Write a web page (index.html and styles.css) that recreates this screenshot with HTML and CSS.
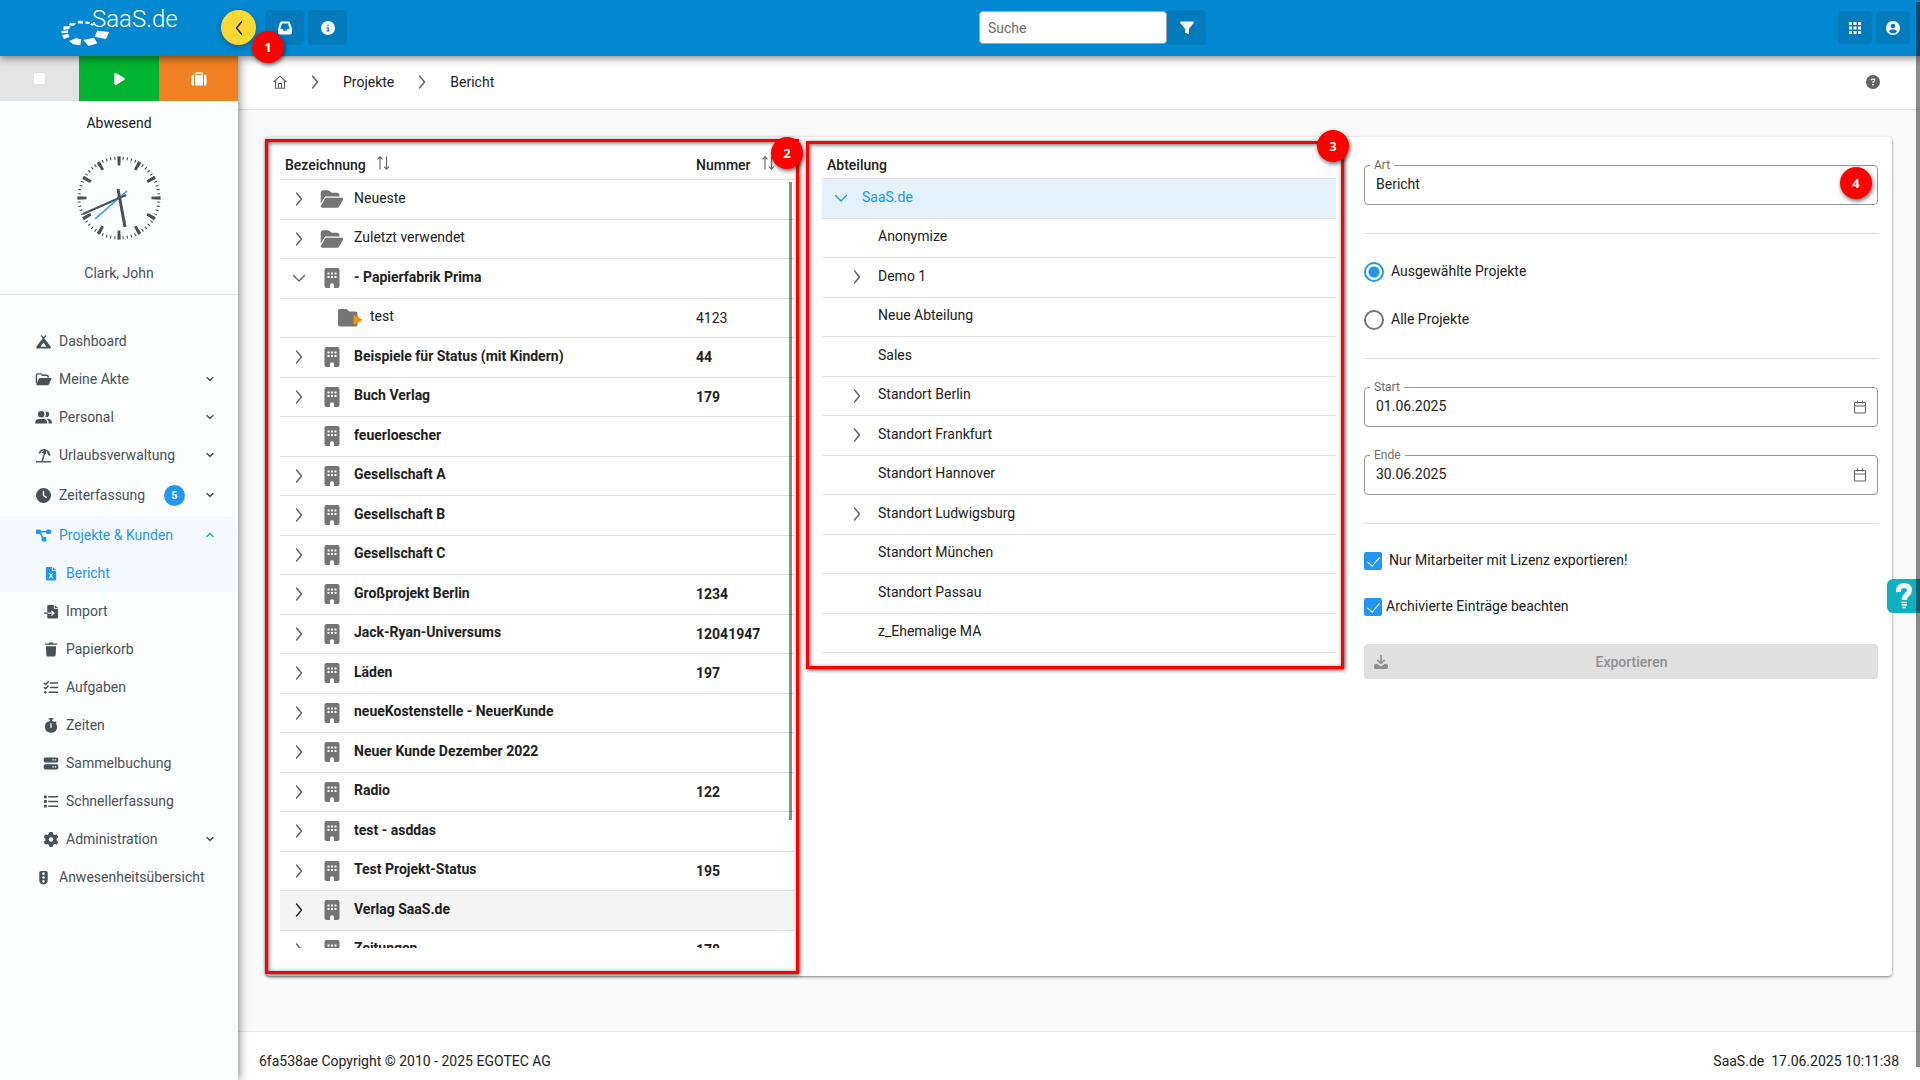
FILE: index.html
```html
<!DOCTYPE html>
<html lang="de">
<head>
    <meta charset="UTF-8">
    <meta name="viewport" content="width=device-width, initial-scale=1.0">
    <title>SaaS.de - Projekte Bericht</title>
    <link rel="stylesheet" href="styles.css">
</head>
<body>
    <!-- Icon sprite -->
    <svg class="sprite" aria-hidden="true">
        <symbol id="i-right" viewBox="0 0 14 14"><path d="M4.5 1l5 6-5 6" fill="none" stroke="currentColor" stroke-width="1.4" stroke-linecap="round" stroke-linejoin="round"/></symbol>
        <symbol id="i-down" viewBox="0 0 14 14"><path d="M1.5 4.5l5.500 5.500 5.500-5.500" fill="none" stroke="currentColor" stroke-width="1.4" stroke-linecap="round" stroke-linejoin="round"/></symbol>
        <symbol id="i-small-down" viewBox="0 0 8 8"><path d="M1 2.500l3 3 3-3" fill="none" stroke="currentColor" stroke-width="1.4" stroke-linecap="round"/></symbol>
        <symbol id="i-small-up" viewBox="0 0 8 8"><path d="M1 5.500l3-3 3 3" fill="none" stroke="currentColor" stroke-width="1.4" stroke-linecap="round"/></symbol>
        <symbol id="i-sort" viewBox="0 0 14 14"><path d="M4 13.500V.8M1.500 3.300L4 .8l2.500 2.500M10.500.5v12.700M8 10.700l2.500 2.500 2.500-2.500" fill="none" stroke="currentColor" stroke-width="1.100"/></symbol>
        <symbol id="i-folder-open" viewBox="0 0 576 512"><path d="M88.7 223.8L0 375.8V96C0 60.7 28.7 32 64 32H181.5c17 0 33.300 6.700 45.300 18.700l26.500 26.500c12 12 28.300 18.700 45.300 18.700H416c35.300 0 64 28.700 64 64v32H144c-22.800 0-43.800 12.100-55.300 31.800zm27.600 16.100C122.100 230 132.600 224 144 224H544c11.500 0 22 6.100 27.700 16.100s5.700 22.200-.1 32.100l-112 192C453.900 474 443.400 480 432 480H32c-11.500 0-22-6.100-27.700-16.100s-5.700-22.200 .1-32.100l112-192z"/></symbol>
        <symbol id="i-folder-line" viewBox="0 0 17 16"><path d="M1 12V3.500Q1 2 2.500 2H6l1.500 1.500H12Q13.500 3.500 13.500 5v1" fill="none" stroke="currentColor" stroke-width="1.500"/><path d="M4.500 6.500h12q.7.200.4.900l-2.700 5.800q-.4.800-1.200.8H1.300q-.8-.1-.4-.9l2.600-5.900q.3-.7 1-.7z"/></symbol>
        <symbol id="i-folder-run" viewBox="0 0 25 20"><path d="M2 1h6q1 0 1.600.8L11 3.500h6.500q2 0 2 2v11q0 2-2 2H2q-2 0-2-2V3q0-2 2-2z"/><path d="M16 7.500l8 4.300-8 4.400z" fill="#ff8f00" stroke="#ff8f00" stroke-linejoin="round"/></symbol>
        <symbol id="i-building" viewBox="0 0 15 20"><path fill-rule="evenodd" d="M2 0h11q2 0 2 2v16q0 2-2 2H9.500v-3q0-1.800-2-1.800t-2 1.800v3H2q-2 0-2-2V2Q0 0 2 0zM3 4.500v2h2v-2zM6.500 4.500v2h2v-2zM10 4.500v2h2v-2zM3 8v2h2V8zM6.500 8v2h2V8zM10 8v2h2V8z"/></symbol>
        <symbol id="i-tent" viewBox="0 0 16 16"><path fill-rule="evenodd" d="M6 1l2 2.500L10 1l1 .8-2 2.900 6.600 8.500q.8 2-1 2.300H1.400q-1.800-.3-1-2.300L7 4.700 5 1.800zM8 9l-3.200 4.500h6.400z"/></symbol>
        <symbol id="i-users" viewBox="0 0 18 16"><circle cx="6.500" cy="4.500" r="3.500"/><path d="M0 14.500q0-5 4-5h5q4 0 4 5z"/><path d="M11 1.600q4-.6 4 2.900t-4 2.900q1.600-3 0-5.800zM12.500 9.300q5.500-.5 5.500 5.200h-3.500q.2-3.500-2-5.200z"/></symbol>
        <symbol id="i-beach" viewBox="0 0 17 16"><path d="M.5 14h16v1.500H.5z"/><path d="M9.300 4.500l1.400.5-3 9.500-1.500-.5z"/><path d="M3 5.500Q5 .8 10 1q5.500 1.300 6 7.500l-2.800-1Q13 3.800 10.500 2.300q1 2 .8 4.500L6.500 5Q7.800 3 9.300 2 6.500 2.300 5 5.800L3 5.500z"/></symbol>
        <symbol id="i-clock" viewBox="0 0 512 512"><path fill-rule="evenodd" d="M256 0a256 256 0 1 1 0 512A256 256 0 1 1 256 0zM232 120V256c0 8 4 15.500 10.700 20l96 64c11 7.400 25.900 4.400 33.300-6.700s4.400-25.900-6.700-33.300L280 243.200V120c0-13.300-10.700-24-24-24s-24 10.700-24 24z"/></symbol>
        <symbol id="i-diagram" viewBox="0 0 17 16"><rect x=".5" y="1.500" width="5" height="5" rx="1"/><rect x="11.500" y="1.500" width="5" height="5" rx="1"/><rect x="6.500" y="9.500" width="5" height="5" rx="1"/><path d="M4 3.200h9v1.600H5.500l3 5-1.300.8L3.500 5z"/></symbol>
        <symbol id="i-excel" viewBox="0 0 12 16"><path fill-rule="evenodd" d="M2 1h5v4h4.500v9q0 1.500-1.500 1.500H2Q.5 15.500.5 14V2.500Q.5 1 2 1zM8 1l3.500 3.200H8zM3.500 7.500l1.800 2.700-1.900 2.800h1.400L6 11.200 7.200 13h1.400l-1.900-2.800 1.800-2.700H7.100L6 9.200 4.900 7.500z"/></symbol>
        <symbol id="i-import" viewBox="0 0 16 16"><path fill-rule="evenodd" d="M5.500 1H11v4h4.500v9q0 1.500-1.500 1.500H5.500Q4 15.500 4 14v-3.500h5.300L8 11.900l1 .9 3-3-3-3-1 .9 1.300 1.400H4V2.500Q4 1 5.500 1zM12 1l3.500 3.200H12z"/><path d="M.5 9.100h4v1.400h-4z"/></symbol>
        <symbol id="i-trash" viewBox="0 0 14 16"><path d="M.5 1.500h4l.6-1h3.800l.6 1h4V3H.5zM1.500 4.500h11l-.6 9.500q-.1 1.500-1.500 1.500H3.600q-1.400 0-1.500-1.500z"/></symbol>
        <symbol id="i-tasks" viewBox="0 0 16 16"><path d="M1 3.500l1.300 1.300L5 2M1 8l1.300 1.300L5 6.500M7.500 3.300H15M7.500 8H15M6 13h9" fill="none" stroke="currentColor" stroke-width="1.600" stroke-linecap="round"/><circle cx="2" cy="13" r="1.300"/></symbol>
        <symbol id="i-stopwatch" viewBox="0 0 14 16"><path fill-rule="evenodd" d="M4.500 0h5v1.700H8v1.400q1.700.3 3 1.300l1-1 1.100 1.100-1 1Q13.500 7.200 13.500 9.300q0 6.200-6.500 6.500Q.5 15.500.5 9.300.6 3.900 6 3.100V1.700H4.500zM6.300 5.500v5h1.400v-5z"/></symbol>
        <symbol id="i-server" viewBox="0 0 16 16"><path fill-rule="evenodd" d="M2 1.500h12q1.800 0 1.800 1.800v1.800q0 1.800-1.800 1.800H2Q.2 6.900.2 5.100V3.300Q.2 1.500 2 1.500zM9.500 3.500v1.400H11V3.500zM12 3.500v1.400h1.500V3.500zM2 8.900h12q1.800 0 1.800 1.800v1.800q0 1.800-1.800 1.800H2q-1.800 0-1.800-1.800v-1.800Q.2 8.900 2 8.900zM9.500 10.900v1.400H11v-1.400zM12 10.900v1.400h1.500v-1.400z"/></symbol>
        <symbol id="i-list" viewBox="0 0 16 16"><path d="M.5 1.500h3v3h-3zM.5 6.500h3v3h-3zM.5 11.500h3v3h-3zM5 2.200h10.500v1.600H5zM5 7.200h10.500v1.600H5zM5 12.200h10.500v1.600H5z"/></symbol>
        <symbol id="i-gear" viewBox="0 0 512 512"><path fill-rule="evenodd" d="M495.900 166.600c3.200 8.700 .5 18.400-6.400 24.600l-43.300 39.400c1.100 8.300 1.700 16.800 1.700 25.400s-.6 17.100-1.700 25.400l43.300 39.400c6.900 6.200 9.600 15.900 6.400 24.600c-4.400 11.900-9.700 23.300-15.800 34.300l-4.700 8.100c-6.600 11-14 21.400-22.100 31.200c-5.900 7.200-15.700 9.600-24.500 6.800l-55.700-17.700c-13.400 10.300-28.200 18.900-44 25.400l-12.500 57.100c-2 9.100-9 16.300-18.200 17.800c-13.800 2.300-28 3.500-42.500 3.500s-28.700-1.200-42.500-3.500c-9.200-1.500-16.200-8.700-18.200-17.800l-12.500-57.100c-15.800-6.500-30.600-15.100-44-25.400L83.100 425.900c-8.800 2.800-18.600 .3-24.500-6.800c-8.100-9.800-15.500-20.200-22.100-31.200l-4.700-8.100c-6.100-11-11.400-22.400-15.800-34.300c-3.200-8.700-.5-18.400 6.400-24.600l43.300-39.400C64.600 273.100 64 264.600 64 256s.6-17.100 1.700-25.400L22.400 191.200c-6.900-6.200-9.600-15.900-6.400-24.600c4.400-11.900 9.700-23.300 15.800-34.300l4.700-8.100c6.600-11 14-21.400 22.100-31.200c5.900-7.200 15.700-9.600 24.500-6.800l55.700 17.700c13.400-10.300 28.200-18.900 44-25.400l12.500-57.100c2-9.100 9-16.300 18.200-17.800C227.300 1.200 241.500 0 256 0s28.700 1.200 42.500 3.500c9.200 1.500 16.200 8.700 18.200 17.800l12.500 57.100c15.800 6.500 30.600 15.100 44 25.400l55.700-17.700c8.800-2.800 18.600-.3 24.500 6.800c8.100 9.800 15.500 20.200 22.100 31.200l4.700 8.100c6.100 11 11.400 22.400 15.800 34.300zM256 336a80 80 0 1 0 0-160 80 80 0 1 0 0 160z"/></symbol>
        <symbol id="i-traffic" viewBox="0 0 10 16"><path fill-rule="evenodd" d="M2.500 1h5Q9.500 1 9.500 3v8q0 4-4.500 4.500Q.5 15 .5 11V3q0-2 2-2zM5 2.500A1.400 1.400 0 1 0 5 5.300 1.400 1.400 0 1 0 5 2.500zM5 6.600A1.400 1.400 0 1 0 5 9.400 1.400 1.400 0 1 0 5 6.600zM5 10.700a1.400 1.400 0 1 0 0 2.800 1.400 1.400 0 1 0 0-2.800z"/></symbol>
        <symbol id="i-inbox" viewBox="0 0 14 14"><path fill-rule="evenodd" d="M3.500.5h7q1.200 0 1.500 1.200L14 8v3.500q0 2-2 2H2q-2 0-2-2V8l2-6.300Q2.300.5 3.500.5zM4 2.500L2.300 8h2.200l1 1.800h3l1-1.800h2.200L10 2.500z"/></symbol>
        <symbol id="i-info" viewBox="0 0 512 512"><path fill-rule="evenodd" d="M256 512A256 256 0 1 0 256 0a256 256 0 1 0 0 512zM216 336h24V272H216c-13.300 0-24-10.700-24-24s10.700-24 24-24h48c13.300 0 24 10.700 24 24v88h8c13.300 0 24 10.700 24 24s-10.700 24-24 24H216c-13.300 0-24-10.700-24-24s10.700-24 24-24zm40-208a32 32 0 1 1 0 64 32 32 0 1 1 0-64z"/></symbol>
        <symbol id="i-question" viewBox="0 0 512 512"><path fill-rule="evenodd" d="M256 512A256 256 0 1 0 256 0a256 256 0 1 0 0 512zM169.800 165.300c7.900-22.300 29.100-37.300 52.800-37.300h58.300c34.900 0 63.100 28.300 63.100 63.100c0 22.600-12.100 43.500-31.700 54.800L280 264.400c-.2 13-10.900 23.600-24 23.600c-13.300 0-24-10.700-24-24V250.500c0-8.600 4.600-16.500 12.100-20.800l44.300-25.400c4.700-2.700 7.600-7.700 7.600-13.100c0-8.400-6.800-15.100-15.100-15.100H222.600c-3.400 0-6.400 2.100-7.500 5.300l-.4 1.200c-4.400 12.500-18.200 19-30.600 14.600s-19-18.200-14.600-30.600l.4-1.200zM224 352a32 32 0 1 1 64 0 32 32 0 1 1 -64 0z"/></symbol>
        <symbol id="i-filter" viewBox="0 0 14 14"><path d="M.8.500h12.400q1 .4.500 1.500L9 7.800v4.700q-.3 1-1.300.6L5 11.200V7.800L.3 2Q-.2.900.8.500z"/></symbol>
        <symbol id="i-grid" viewBox="0 0 12 12"><path d="M0 0h3v3H0zM4.500 0h3v3h-3zM9 0h3v3H9zM0 4.500h3v3H0zM4.500 4.500h3v3h-3zM9 4.500h3v3H9zM0 9h3v3H0zM4.500 9h3v3h-3zM9 9h3v3H9z"/></symbol>
        <symbol id="i-user" viewBox="0 0 14 14"><path fill-rule="evenodd" d="M7 0a7 7 0 1 1 0 14A7 7 0 1 1 7 0zM7 2.700a2.400 2.400 0 1 0 0 4.800 2.400 2.400 0 1 0 0-4.800zM3 10.500q1.500 2 4 2t4-2Q10.300 8.600 8.500 8.600h-3Q3.700 8.600 3 10.500z"/></symbol>
        <symbol id="i-suitcase" viewBox="0 0 16 14"><path fill-rule="evenodd" d="M4 13.500V1.800Q4 .3 5.500.3h5q1.500 0 1.500 1.500v11.700zM5.500 3h5V1.700h-5z"/><path d="M3 2.800v10.700H2q-1.500 0-1.500-1.500V4.300Q.5 2.800 2 2.800zM13 2.800v10.700h1q1.500 0 1.500-1.500V4.300q0-1.500-1.500-1.500z"/></symbol>
        <symbol id="i-play" viewBox="0 0 384 512"><path d="M73 39c-14.800-9.100-33.400-9.400-48.500-.9S0 62.600 0 80V432c0 17.400 9.400 33.400 24.500 41.900s33.700 8.100 48.500-.9L361 297c14.300-8.700 23-24.200 23-41s-8.700-32.200-23-41L73 39z"/></symbol>
        <symbol id="i-home" viewBox="0 0 14 14"><path d="M.7 7L7 1.200 13.300 7M2.500 5.500v7.800h9V5.500M5.500 13V8.500h3V13" fill="none" stroke="currentColor" stroke-width="1.100"/></symbol>
        <symbol id="i-calendar" viewBox="0 0 14 14"><path d="M2.500 2.500h9q1 0 1 1V12q0 1-1 1h-9q-1 0-1-1V3.500q0-1 1-1zM1.500 6h11M4.500.5v3M9.500.5v3" fill="none" stroke="currentColor" stroke-width="1.100"/></symbol>
        <symbol id="i-download" viewBox="0 0 14 14"><path d="M6.200 0h1.600v6.500L10 4.300l1.100 1.100L7 9.500 2.900 5.400 4 4.300l2.200 2.200z"/><path d="M1.500 9h2L7 11.500 10.500 9h2Q14 9 14 10.500v2q0 1.500-1.500 1.500h-11Q0 14 0 12.500v-2Q0 9 1.500 9z"/></symbol>
    </svg>

    <header class="topbar">
        <div class="topbar-left">
            <a class="logo" href="#">
                <svg width="120" height="40" viewBox="0 0 120 40">
                    <g transform="scale(.333) translate(-183 -22)">
                        <path d="M292 90l36 4-10 21-34-7zM250 118l32-7 10 17-26 8zM207 121l21-8 16 3-3 18-21-3zM186 104l18-5 5 9-17 7zM184 91l21-2-2 8-18 1zM191 77l21 0-6 9-16 1zM210 66l18 2-7 8-14-2zM234 60l16 1-2 8-15-1zM257 62l13 2-2 6-12-1zM274 68l8 2-3 5-8-2z"/>
                    </g>
                    <text x="31" y="19">SaaS.de</text>
                </svg>
            </a>
            <button class="toggle-menu" type="button" aria-label="Menü einklappen"><svg width="14" height="14"><use href="#i-right"/></svg></button>
            <button class="top-btn" type="button" aria-label="Posteingang"><svg width="14" height="14"><use href="#i-inbox"/></svg></button>
            <button class="top-btn" type="button" aria-label="Info"><svg width="14" height="14"><use href="#i-info"/></svg></button>
            <span class="marker marker-1">1</span>
        </div>
        <form class="search">
            <input type="text" placeholder="Suche" aria-label="Suche">
            <button class="top-btn" type="button" aria-label="Filter"><svg width="14" height="14"><use href="#i-filter"/></svg></button>
        </form>
        <div class="topbar-right">
            <button class="top-btn top-btn-small" type="button" aria-label="Apps"><svg width="12" height="12"><use href="#i-grid"/></svg></button>
            <button class="top-btn top-btn-small" type="button" aria-label="Profil"><svg width="14" height="14"><use href="#i-user"/></svg></button>
        </div>
    </header>

    <div class="layout">
        <aside class="sidebar">
            <div class="time-buttons">
                <button class="stop" type="button" aria-label="Stopp"><span class="stop-icon"></span></button>
                <button class="play" type="button" aria-label="Start"><svg width="11" height="14"><use href="#i-play"/></svg></button>
                <button class="trip" type="button" aria-label="Dienstreise"><svg width="16" height="14"><use href="#i-suitcase"/></svg></button>
            </div>
            <div class="user-status">
                <div class="status">Abwesend</div>
                <svg class="clock" width="84" height="84" viewBox="-42 -42 84 84">
                    <circle class="ticks" r="40" pathLength="60" stroke-width="3" stroke-dasharray=".26 .74" stroke-dashoffset=".13"/>
                    <circle class="ticks" r="37" pathLength="12" stroke-width="9" stroke-dasharray=".16 .84" stroke-dashoffset=".08"/>
                    <path class="hand" d="M7-3L-36 16" stroke-width="2"/>
                    <path class="hand-second" d="M8-7L-24 21"/>
                    <path class="hand" d="M-1-9L6 29" stroke-width="3"/>
                    <circle r="2" fill="#495057"/>
                </svg>
                <div class="user-name">Clark, John</div>
            </div>
            <nav class="menu">
                <a href="#"><svg><use href="#i-tent"/></svg><span>Dashboard</span></a>
                <a href="#"><svg><use href="#i-folder-line"/></svg><span>Meine Akte</span><svg class="arrow"><use href="#i-small-down"/></svg></a>
                <a href="#"><svg><use href="#i-users"/></svg><span>Personal</span><svg class="arrow"><use href="#i-small-down"/></svg></a>
                <a href="#"><svg><use href="#i-beach"/></svg><span>Urlaubsverwaltung</span><svg class="arrow"><use href="#i-small-down"/></svg></a>
                <a class="with-badge" href="#"><svg><use href="#i-clock"/></svg><span>Zeiterfassung</span><b class="badge">5</b><svg class="arrow"><use href="#i-small-down"/></svg></a>
                <a class="active" href="#"><svg><use href="#i-diagram"/></svg><span>Projekte &amp; Kunden</span><svg class="arrow"><use href="#i-small-up"/></svg></a>
                <a class="sub active" href="#"><svg><use href="#i-excel"/></svg><span>Bericht</span></a>
                <a class="sub" href="#"><svg><use href="#i-import"/></svg><span>Import</span></a>
                <a class="sub" href="#"><svg><use href="#i-trash"/></svg><span>Papierkorb</span></a>
                <a class="sub" href="#"><svg><use href="#i-tasks"/></svg><span>Aufgaben</span></a>
                <a class="sub" href="#"><svg><use href="#i-stopwatch"/></svg><span>Zeiten</span></a>
                <a class="sub" href="#"><svg><use href="#i-server"/></svg><span>Sammelbuchung</span></a>
                <a class="sub" href="#"><svg><use href="#i-list"/></svg><span>Schnellerfassung</span></a>
                <a class="sub" href="#"><svg><use href="#i-gear"/></svg><span>Administration</span><svg class="arrow"><use href="#i-small-down"/></svg></a>
                <a href="#"><svg><use href="#i-traffic"/></svg><span>Anwesenheitsübersicht</span></a>
            </nav>
        </aside>

        <main class="main">
            <div class="breadcrumb">
                <a href="#" aria-label="Startseite"><svg width="14" height="14"><use href="#i-home"/></svg></a>
                <svg width="14" height="14"><use href="#i-right"/></svg>
                <a href="#">Projekte</a>
                <svg width="14" height="14"><use href="#i-right"/></svg>
                <a href="#">Bericht</a>
                <svg class="help" width="14" height="14"><use href="#i-question"/></svg>
            </div>

            <div class="content">
                <div class="card">
                    <section class="column">
                        <div class="scroller">
                            <table class="tree projects">
                                <thead>
                                    <tr>
                                        <th>Bezeichnung <svg width="14" height="14"><use href="#i-sort"/></svg></th>
                                        <th class="number">Nummer <svg width="14" height="14"><use href="#i-sort"/></svg></th>
                                    </tr>
                                </thead>
                                <tbody>
                                    <tr><td><div class="cell"><svg class="chevron"><use href="#i-right"/></svg><svg class="folder"><use href="#i-folder-open"/></svg><span>Neueste</span></div></td><td></td></tr>
                                    <tr><td><div class="cell"><svg class="chevron"><use href="#i-right"/></svg><svg class="folder"><use href="#i-folder-open"/></svg><span>Zuletzt verwendet</span></div></td><td></td></tr>
                                    <tr class="customer"><td><div class="cell"><svg class="chevron"><use href="#i-down"/></svg><svg class="building"><use href="#i-building"/></svg><span>- Papierfabrik Prima</span></div></td><td></td></tr>
                                    <tr><td><div class="cell child"><svg class="chevron"></svg><svg class="folder-run"><use href="#i-folder-run"/></svg><span>test</span></div></td><td>4123</td></tr>
                                    <tr class="customer"><td><div class="cell"><svg class="chevron"><use href="#i-right"/></svg><svg class="building"><use href="#i-building"/></svg><span>Beispiele für Status (mit Kindern)</span></div></td><td>44</td></tr>
                                    <tr class="customer"><td><div class="cell"><svg class="chevron"><use href="#i-right"/></svg><svg class="building"><use href="#i-building"/></svg><span>Buch Verlag</span></div></td><td>179</td></tr>
                                    <tr class="customer"><td><div class="cell"><svg class="chevron"></svg><svg class="building"><use href="#i-building"/></svg><span>feuerloescher</span></div></td><td></td></tr>
                                    <tr class="customer"><td><div class="cell"><svg class="chevron"><use href="#i-right"/></svg><svg class="building"><use href="#i-building"/></svg><span>Gesellschaft A</span></div></td><td></td></tr>
                                    <tr class="customer"><td><div class="cell"><svg class="chevron"><use href="#i-right"/></svg><svg class="building"><use href="#i-building"/></svg><span>Gesellschaft B</span></div></td><td></td></tr>
                                    <tr class="customer"><td><div class="cell"><svg class="chevron"><use href="#i-right"/></svg><svg class="building"><use href="#i-building"/></svg><span>Gesellschaft C</span></div></td><td></td></tr>
                                    <tr class="customer"><td><div class="cell"><svg class="chevron"><use href="#i-right"/></svg><svg class="building"><use href="#i-building"/></svg><span>Großprojekt Berlin</span></div></td><td>1234</td></tr>
                                    <tr class="customer"><td><div class="cell"><svg class="chevron"><use href="#i-right"/></svg><svg class="building"><use href="#i-building"/></svg><span>Jack-Ryan-Universums</span></div></td><td>12041947</td></tr>
                                    <tr class="customer"><td><div class="cell"><svg class="chevron"><use href="#i-right"/></svg><svg class="building"><use href="#i-building"/></svg><span>Läden</span></div></td><td>197</td></tr>
                                    <tr class="customer"><td><div class="cell"><svg class="chevron"><use href="#i-right"/></svg><svg class="building"><use href="#i-building"/></svg><span>neueKostenstelle - NeuerKunde</span></div></td><td></td></tr>
                                    <tr class="customer"><td><div class="cell"><svg class="chevron"><use href="#i-right"/></svg><svg class="building"><use href="#i-building"/></svg><span>Neuer Kunde Dezember 2022</span></div></td><td></td></tr>
                                    <tr class="customer"><td><div class="cell"><svg class="chevron"><use href="#i-right"/></svg><svg class="building"><use href="#i-building"/></svg><span>Radio</span></div></td><td>122</td></tr>
                                    <tr class="customer"><td><div class="cell"><svg class="chevron"><use href="#i-right"/></svg><svg class="building"><use href="#i-building"/></svg><span>test - asddas</span></div></td><td></td></tr>
                                    <tr class="customer"><td><div class="cell"><svg class="chevron"><use href="#i-right"/></svg><svg class="building"><use href="#i-building"/></svg><span>Test Projekt-Status</span></div></td><td>195</td></tr>
                                    <tr class="customer hovered"><td><div class="cell"><svg class="chevron"><use href="#i-right"/></svg><svg class="building"><use href="#i-building"/></svg><span>Verlag SaaS.de</span></div></td><td></td></tr>
                                    <tr class="customer"><td><div class="cell"><svg class="chevron"><use href="#i-right"/></svg><svg class="building"><use href="#i-building"/></svg><span>Zeitungen</span></div></td><td>178</td></tr>
                                </tbody>
                            </table>
                        </div>
                        <div class="scroll-thumb"></div>
                        <div class="frame frame-projects"></div>
                        <span class="marker marker-2">2</span>
                    </section>

                    <section class="column">
                        <table class="tree departments">
                            <thead>
                                <tr><th>Abteilung</th></tr>
                            </thead>
                            <tbody>
                                <tr class="selected"><td><div class="cell"><svg class="chevron"><use href="#i-down"/></svg><span>SaaS.de</span></div></td></tr>
                                <tr><td><div class="cell child"><svg class="chevron"></svg><span>Anonymize</span></div></td></tr>
                                <tr><td><div class="cell child"><svg class="chevron"><use href="#i-right"/></svg><span>Demo 1</span></div></td></tr>
                                <tr><td><div class="cell child"><svg class="chevron"></svg><span>Neue Abteilung</span></div></td></tr>
                                <tr><td><div class="cell child"><svg class="chevron"></svg><span>Sales</span></div></td></tr>
                                <tr><td><div class="cell child"><svg class="chevron"><use href="#i-right"/></svg><span>Standort Berlin</span></div></td></tr>
                                <tr><td><div class="cell child"><svg class="chevron"><use href="#i-right"/></svg><span>Standort Frankfurt</span></div></td></tr>
                                <tr><td><div class="cell child"><svg class="chevron"></svg><span>Standort Hannover</span></div></td></tr>
                                <tr><td><div class="cell child"><svg class="chevron"><use href="#i-right"/></svg><span>Standort Ludwigsburg</span></div></td></tr>
                                <tr><td><div class="cell child"><svg class="chevron"></svg><span>Standort München</span></div></td></tr>
                                <tr><td><div class="cell child"><svg class="chevron"></svg><span>Standort Passau</span></div></td></tr>
                                <tr><td><div class="cell child"><svg class="chevron"></svg><span>z_Ehemalige MA</span></div></td></tr>
                            </tbody>
                        </table>
                        <div class="frame frame-departments"></div>
                        <span class="marker marker-3">3</span>
                    </section>

                    <form class="column export-form">
                        <div class="field">
                            <label for="art">Art</label>
                            <select id="art"><option>Bericht</option></select>
                            <span class="marker marker-4">4</span>
                        </div>
                        <hr>
                        <div class="choices">
                            <div class="choice">
                                <input type="radio" id="selected-projects" name="projects" checked>
                                <label for="selected-projects">Ausgewählte Projekte</label>
                            </div>
                            <div class="choice">
                                <input type="radio" id="all-projects" name="projects">
                                <label for="all-projects">Alle Projekte</label>
                            </div>
                        </div>
                        <hr>
                        <div class="field">
                            <label for="start">Start</label>
                            <input type="text" id="start" value="01.06.2025">
                            <svg class="calendar"><use href="#i-calendar"/></svg>
                        </div>
                        <div class="field">
                            <label for="ende">Ende</label>
                            <input type="text" id="ende" value="30.06.2025">
                            <svg class="calendar"><use href="#i-calendar"/></svg>
                        </div>
                        <hr>
                        <div class="choices">
                            <div class="choice check">
                                <input type="checkbox" id="licensed" checked>
                                <label for="licensed">Nur Mitarbeiter mit Lizenz exportieren!</label>
                            </div>
                            <div class="choice check tight">
                                <input type="checkbox" id="archived" checked>
                                <label for="archived">Archivierte Einträge beachten</label>
                            </div>
                        </div>
                        <button class="export" type="button" disabled><svg width="14" height="14"><use href="#i-download"/></svg><span>Exportieren</span></button>
                    </form>
                </div>
            </div>

            <footer class="footer">
                <span>6fa538ae Copyright © 2010 - 2025 EGOTEC AG</span>
                <span class="footer-right"><span>SaaS.de</span><span>17.06.2025 10:11:38</span></span>
            </footer>
        </main>
    </div>

    <button class="help-tab" type="button" aria-label="Hilfe">
        <svg width="18" height="28" viewBox="0 0 18 28">
            <path d="M3.500 10C2.500 1.500 15 1.500 14.500 8.500c-.2 4-5.200 4-5.200 9.500" fill="none" stroke="#fff" stroke-width="5"/>
            <path d="M6.500 20.500h5.500M6.500 23h5.500M7.500 25.500h3.500" stroke="#fff" stroke-width="1.300"/>
        </svg>
    </button>
    <div class="page-thumb"></div>
</body>
</html>
```

FILE: styles.css
```css
* {
    box-sizing: border-box;
}
body {
    margin: 0;
    min-height: 100vh;
    display: flex;
    flex-direction: column;
    font-family: Roboto, "Liberation Sans", sans-serif;
    font-size: 14px;
    line-height: 20px;
    color: #212121;
    background-color: #fafafa;
}
a {
    color: inherit;
    text-decoration: none;
}
button,
input,
select {
    font: inherit;
    color: inherit;
    margin: 0;
}
button {
    border: none;
    padding: 0;
    cursor: pointer;
}
svg {
    fill: currentColor;
    flex: none;
}
.sprite {
    display: none;
}

/* Top bar */
.topbar {
    position: relative;
    z-index: 2;
    height: 56px;
    padding: 0 10px 1px 0;
    display: flex;
    align-items: center;
    justify-content: space-between;
    background-color: #0288d1;
    color: #fff;
    box-shadow: 0 2px 8px rgba(0, 0, 0, 0.5);
}
.topbar-left,
.topbar-right,
.search {
    position: relative;
    display: flex;
    align-items: center;
    gap: 4px;
}
.logo {
    width: 217px;
    height: 40px;
    padding-left: 61px;
}
.logo svg {
    overflow: visible;
}
.logo text {
    font-size: 24px;
    font-weight: 300;
}
.toggle-menu {
    width: 35px;
    height: 35px;
    margin-right: 5px;
    display: grid;
    place-items: center;
    border-radius: 50%;
    background-color: #fdd835;
    color: #212121;
    box-shadow: 0 2px 6px rgba(0, 0, 0, 0.3);
}
.toggle-menu svg {
    transform: rotate(180deg);
}
.top-btn {
    width: 39px;
    height: 35px;
    display: grid;
    place-items: center;
    border-radius: 4px;
    background-color: #027bbd;
    color: #fff;
}
.top-btn-small {
    width: 34px;
    height: 33px;
}
.search {
    gap: 0;
}
.search input {
    width: 188px;
    height: 33px;
    padding: 0 8px;
    border: 1px solid #a6a6a6;
    border-radius: 4px;
    background-color: #fff;
    color: #212121;
}
.search input::placeholder {
    color: #6c6c6c;
}

/* Sidebar */
.layout {
    flex: 1;
    display: flex;
}
.sidebar {
    position: relative;
    z-index: 1;
    width: 238px;
    flex: none;
    background-color: #fdfeff;
    color: #495057;
    box-shadow: 0 0 10px rgba(0, 0, 0, 0.6);
}
.time-buttons {
    display: grid;
    grid-template-columns: 79px 80px 79px;
}
.time-buttons button {
    height: 45px;
    display: grid;
    place-items: center;
    color: #fff;
}
.stop {
    background-color: #e4e4e4;
}
.play {
    background-color: #00b330;
}
.trip {
    background-color: #ef8122;
}
.stop-icon {
    width: 11px;
    height: 11px;
    border-radius: 2px;
    background-color: #fff;
}
.user-status {
    padding: 12px 0 11px;
    display: flex;
    flex-direction: column;
    align-items: center;
    gap: 23px;
    border-bottom: 1px solid #dee2e6;
}
.status {
    color: #212121;
}
.ticks {
    fill: none;
    stroke: #495057;
}
.hand {
    stroke: #495057;
}
.hand-second {
    stroke: #2196f3;
    stroke-width: 1.5;
}
.menu {
    margin-top: 27px;
    padding-bottom: 28px;
}
.menu a {
    height: 38px;
    padding: 0 24px 0 35px;
    display: flex;
    align-items: center;
    gap: 7px;
}
.menu svg {
    width: 17px;
    height: 15px;
}
.menu .sub {
    padding-left: 43px;
}
.menu .sub svg {
    width: 16px;
}
.menu .with-badge {
    height: 42px;
}
.menu .active {
    background-color: #f4faff;
    color: #2196f3;
}
.menu .arrow,
.menu .sub .arrow {
    width: 8px;
    height: 8px;
    margin-left: auto;
}
.badge {
    width: 21px;
    height: 21px;
    margin-left: auto;
    margin-right: 14px;
    border-radius: 50%;
    background-color: #2196f3;
    color: #fff;
    font-size: 11px;
    line-height: 21px;
    text-align: center;
}
.menu .badge + .arrow {
    margin-left: 0;
}

/* Main area */
.main {
    flex: 1;
    min-width: 0;
    display: flex;
    flex-direction: column;
}
.breadcrumb {
    height: 54px;
    padding: 0 40px 2px 35px;
    display: flex;
    align-items: center;
    gap: 21px;
    border-bottom: 1px solid #e0e0e0;
    background-color: #fff;
}
.breadcrumb svg {
    display: block;
    color: #616161;
}
.breadcrumb .help {
    margin-left: auto;
}
.content {
    flex: 1;
    padding: 27px 28px 55px;
}
.card {
    padding: 14px 14px 28px;
    display: grid;
    grid-template-columns: repeat(3, minmax(0, 1fr));
    align-items: start;
    gap: 28px;
    border-radius: 4px;
    background-color: #fff;
    box-shadow: 0 1px 3px rgba(0, 0, 0, 0.5);
}
.column {
    position: relative;
}

/* Tree tables */
.scroller {
    max-height: calc(100vh - 283px);
    overflow-y: auto;
    scrollbar-width: none;
}
.scroll-thumb {
    position: absolute;
    top: 31px;
    right: 2px;
    width: 3px;
    height: 80%;
    background-color: rgba(0, 0, 0, 0.45);
}
.tree {
    width: 100%;
    border-collapse: separate;
    border-spacing: 0;
    table-layout: fixed;
}
.tree th {
    position: sticky;
    top: 0;
    height: 29px;
    padding: 0 5px;
    border-bottom: 1px solid #e0e0e0;
    background-color: #fff;
    font-weight: 500;
    text-align: left;
}
.departments th {
    height: 28px;
}
.tree th svg {
    margin-left: 7px;
    color: #616161;
}
.tree .number {
    width: 103px;
    white-space: nowrap;
}
.tree td {
    height: 40px;
    padding: 0 5px 1px;
    border-bottom: 1px solid #e0e0e0;
}
.tree tr:nth-child(even) td {
    height: 39px;
}
.cell {
    display: flex;
    align-items: center;
}
.cell span {
    padding-bottom: 3px;
}
.chevron {
    width: 14px;
    height: 14px;
    margin: 0 6px 0 7px;
    color: #616161;
}
.folder,
.building {
    width: 24px;
    height: 20px;
    margin: 0 10px 0 8px;
    color: #757575;
}
.folder-run {
    width: 25px;
    height: 20px;
    margin: 0 7px 0 10px;
    color: #757575;
}
.projects .child {
    padding-left: 16px;
}
.customer {
    font-weight: 700;
}
.hovered td {
    background-color: #f4f4f4;
}
.hovered .chevron {
    color: #212121;
}
.departments .child {
    padding-left: 16px;
}
.departments .chevron {
    margin-right: 14px;
}
.selected td {
    background-color: #e3f2fd;
    color: #2196f3;
}
.selected .chevron {
    color: #2196f3;
}

/* Red frames and numbered markers */
.frame {
    position: absolute;
    border: 3px solid #f00;
    box-shadow: 1px 1px 4px rgba(0, 0, 0, 0.7), inset 1px 1px 4px rgba(0, 0, 0, 0.6);
    pointer-events: none;
}
.frame-projects {
    inset: -12px -5px -26px -15px;
}
.frame-departments {
    inset: -10px -8px -16px -16px;
}
.marker {
    position: absolute;
    width: 32px;
    height: 32px;
    border-radius: 50%;
    background-color: #f00;
    color: #fff;
    font-family: "Open Sans", sans-serif;
    font-size: 13px;
    font-weight: 700;
    line-height: 32px;
    text-align: center;
    box-shadow: 1px 2px 4px rgba(0, 0, 0, 0.6);
}
.marker-1 {
    top: 23px;
    left: 252px;
}
.marker-2 {
    top: -14px;
    right: -9px;
}
.marker-3 {
    top: -21px;
    right: -13px;
}
.marker-4 {
    top: 2px;
    right: 6px;
}

/* Export form */
.export-form {
    padding-top: 14px;
    display: flex;
    flex-direction: column;
    gap: 28px;
}
.export-form hr {
    width: 100%;
    margin: 0;
    border: none;
    border-top: 1px solid #dedede;
}
.field {
    position: relative;
}
.field label {
    position: absolute;
    top: -8px;
    left: 6px;
    padding: 0 4px;
    background-color: #fff;
    color: #6c6c6c;
    font-size: 12px;
    line-height: 16px;
}
.field input,
.field select {
    display: block;
    width: 100%;
    height: 40px;
    padding: 0 11px 3px;
    border: 1px solid #949494;
    border-radius: 4px;
    background-color: #fff;
    appearance: none;
}
.calendar {
    position: absolute;
    top: 13px;
    right: 11px;
    width: 14px;
    height: 14px;
    color: #616161;
}
.choices {
    display: flex;
    flex-direction: column;
    gap: 28px;
}
.choice {
    height: 20px;
    display: flex;
    align-items: center;
    gap: 7px;
}
.choice.check {
    height: 18px;
}
.choice.tight {
    gap: 4px;
}
.choice label {
    padding-bottom: 2px;
}
.choice input {
    position: relative;
    appearance: none;
}
.choice input[type="radio"] {
    width: 20px;
    height: 20px;
    border: 2px solid #757575;
    border-radius: 50%;
}
.choice input[type="radio"]:checked {
    border-color: #2196f3;
    background: radial-gradient(circle, #2196f3 5px, #fff 6px);
}
.choice input[type="checkbox"] {
    width: 18px;
    height: 18px;
    border-radius: 2px;
    background-color: #2196f3;
}
.choice input[type="checkbox"]::after {
    content: "";
    position: absolute;
    top: 2px;
    left: 6px;
    width: 6px;
    height: 11px;
    border: solid #fff;
    border-width: 0 1px 1px 0;
    transform: rotate(40deg);
}
.export {
    height: 35px;
    padding: 0 10px;
    display: flex;
    align-items: center;
    gap: 7px;
    border-radius: 4px;
    background-color: #e0e0e0;
    color: #8f8f8f;
    font-weight: 500;
}
.export span {
    flex: 1;
}

/* Footer */
.footer {
    min-height: 49px;
    padding: 10px 21px 0;
    display: flex;
    align-items: center;
    justify-content: space-between;
    border-top: 1px solid #e8e8e8;
    background-color: #fff;
}
.footer-right {
    display: flex;
    gap: 7px;
}
.help-tab {
    position: fixed;
    top: 579px;
    right: 0;
    width: 33px;
    height: 34px;
    padding-top: 3px;
    border-radius: 6px 0 0 6px;
    background-color: #10b1bf;
}
.page-thumb {
    position: fixed;
    z-index: 3;
    top: 2px;
    right: 0;
    bottom: 13px;
    width: 4px;
    background-color: rgba(0, 0, 0, 0.45);
}
```
